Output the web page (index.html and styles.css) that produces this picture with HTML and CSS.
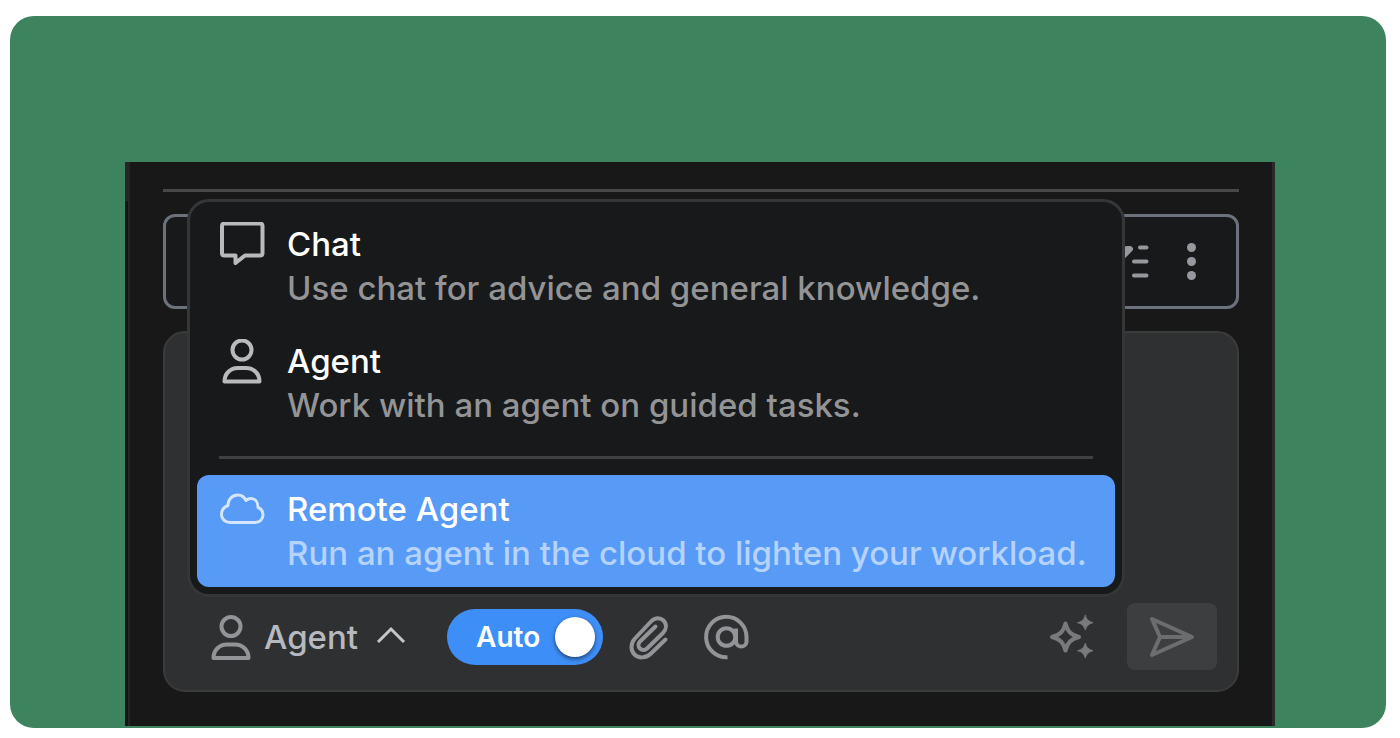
FILE: index.html
```html
<!DOCTYPE html>
<html lang="en">
<head>
<meta charset="utf-8">
<title>Agent mode menu</title>
<link rel="stylesheet" href="styles.css">
</head>
<body>
<main class="stage">
  <section class="panel">
    <hr class="panel-rule">
    <div class="thread-bar">
      <button class="icon-btn" aria-label="Tasks">
        <svg class="icon" viewBox="0 0 46 46"><path d="M31 8.500H37.500M25 22.500H37.500M25 36.500H37.500"/><path class="task-check" d="M3 13L11 20L21 10H18"/></svg>
      </button>
      <button class="icon-btn" aria-label="More options">
        <svg class="icon dots" viewBox="0 0 46 46"><circle cx="22.500" cy="8.500" r="4.500"/><circle cx="22.500" cy="22.500" r="4.500"/><circle cx="22.500" cy="36.500" r="4.500"/></svg>
      </button>
    </div>

    <form class="composer">
      <textarea class="prompt" aria-label="Prompt"></textarea>
      <div class="toolbar">
        <button type="button" class="mode-btn" aria-haspopup="menu" aria-expanded="true">
          <svg class="icon" viewBox="0 0 46 46"><circle cx="23" cy="12.500" r="9.500"/><path d="M5.500 44C5.500 36 11.500 30.500 19 30.500H27C34.500 30.500 40.500 36 40.500 44Z"/></svg>
          <span>Agent</span>
          <svg class="chevron" viewBox="0 0 32 46"><path d="M3 28L16 15L29 28"/></svg>
        </button>
        <label class="toggle">
          <span>Auto</span>
          <input class="knob" type="checkbox" role="switch" checked>
        </label>
        <button type="button" class="icon-btn attach" aria-label="Attach file">
          <svg class="icon" viewBox="0 0 46 46"><path d="M39.500 25.500L25 39.500C20 44.500 12.500 44.500 8.500 40.500C4.500 36.500 4.500 29.500 8.500 25L25 7.500C28.500 3.500 34 3 37.500 6.500C41 10 40.500 15 37 19L21 34.500C19 36.500 16 36.500 14 34.500C12 32.500 12 29.500 14 27.500L29.500 12.500"/></svg>
        </button>
        <button type="button" class="icon-btn" aria-label="Mention">
          <svg class="icon at" viewBox="0 0 46 46"><circle cx="23.500" cy="23" r="8.800"/><path d="M33 14.500V28A5.300 5.300 0 0 0 43.500 28V23A20.200 20.200 0 1 0 24.500 43.200"/></svg>
        </button>
        <button type="button" class="icon-btn enhance" aria-label="Enhance prompt">
          <svg class="icon" viewBox="0 0 46 46"><path d="M17.500 9.500C19.500 17.500 23 21 31 23C23 25 19.500 28.500 17.500 36.500C15.500 28.500 12 25 4 23C12 21 15.500 17.500 17.500 9.500Z"/><path class="solid" d="M37.300 1.500C38.800 6 40.500 7.500 45 8.700C40.500 9.900 38.800 11.500 37.300 16C35.800 11.500 34.100 9.900 29.600 8.700C34.100 7.500 35.800 6 37.300 1.500ZM37.300 29.500C38.800 34 40.500 35.500 45 36.700C40.500 37.900 38.800 39.500 37.300 44C35.800 39.500 34.100 37.900 29.600 36.700C34.100 35.500 35.800 34 37.300 29.500Z"/></svg>
        </button>
        <button class="send" aria-label="Send">
          <svg class="icon" viewBox="0 0 46 46"><path d="M3 5L43 23L3 41L11 23ZM11 23H43"/></svg>
        </button>
      </div>
    </form>

    <div class="menu" role="menu" aria-label="Mode">
      <button class="item" role="menuitem">
        <svg class="icon" viewBox="0 0 46 46"><path d="M5.500 1.500H41C42.500 1.500 43.500 2.500 43.500 4V31C43.500 32.500 42.500 33.500 41 33.500H26L16.500 41V33.500H5.500C4 33.500 3 32.500 3 31V4C3 2.500 4 1.500 5.500 1.500Z"/></svg>
        <span class="copy"><span class="title">Chat</span><span class="desc">Use chat for advice and general knowledge.</span></span>
      </button>
      <button class="item" role="menuitem">
        <svg class="icon" viewBox="0 0 46 46"><circle cx="23" cy="11" r="9.500"/><path d="M5.500 42.500C5.500 34.500 11.500 29 19 29H27C34.500 29 40.500 34.500 40.500 42.500Z"/></svg>
        <span class="copy"><span class="title">Agent</span><span class="desc">Work with an agent on guided tasks.</span></span>
      </button>
      <hr class="menu-rule">
      <button class="item selected" role="menuitem">
        <svg class="icon" viewBox="0 0 46 46"><path d="M11 35.500H36.500C41 35.500 44 32 44 28C44 24.500 42 21.500 39 20.500C39 15 36 11.500 32 11.500C30 11.500 28.500 12 27 13.500C25 9.500 22 8 19 8C13 8 9 12.500 9 18.500C5 20 2.500 23 2.500 27.500C2.500 32 6 35.500 11 35.500Z"/></svg>
        <span class="copy"><span class="title">Remote Agent</span><span class="desc">Run an agent in the cloud to lighten your workload.</span></span>
      </button>
    </div>
  </section>
</main>
</body>
</html>
```

FILE: styles.css
```css
* { box-sizing: border-box; }

body {
  margin: 0;
  padding: 16px 14px 10px 10px;
  background: #fff;
  font-family: Inter, "Liberation Sans", sans-serif;
}

button {
  border: 0;
  padding: 0;
  background: none;
  color: inherit;
  font: inherit;
  text-align: left;
}

hr { margin: 0; border: 0; }

.stage {
  padding: 146px 111px 2px 115px;
  border-radius: 24px;
  background: #3d845e;
}

.panel {
  position: relative;
  padding: 27px 33px 34px 33px;
  border-left: 5px solid #262626;
  border-right: 3px solid #2a2a2a;
  background: #181818;
}

.panel::before {
  content: "";
  position: absolute;
  top: 39px;
  bottom: 0;
  left: -5px;
  width: 3px;
  background: #141415;
}

.panel-rule { height: 3px; background: #484848; }

.thread-bar {
  display: flex;
  justify-content: flex-end;
  align-items: center;
  gap: 14px;
  height: 95px;
  margin-top: 22px;
  padding-right: 21px;
  border: 3px solid #6c727c;
  border-radius: 12px;
  background: #18191b;
  color: #97989d;
}

.icon-btn { display: flex; }

.icon {
  flex: none;
  width: 46px;
  height: 46px;
  fill: none;
  stroke: currentColor;
  stroke-width: 4;
  stroke-linecap: round;
  stroke-linejoin: round;
}

.dots { fill: currentColor; stroke: none; }

.task-check { stroke-width: 6; }

.composer {
  margin-top: 22px;
  padding: 3px 20px 20px 43px;
  border: 2px solid #3a3b3b;
  border-radius: 22px;
  background: #2f3031;
}

.prompt {
  display: block;
  width: 100%;
  height: 267px;
  border: 0;
  background: transparent;
  color: #fff;
  font: inherit;
  resize: none;
  outline: 0;
}

.toolbar { display: flex; align-items: center; color: #929498; }

.mode-btn {
  display: flex;
  align-items: center;
  gap: 10px;
  font-size: 33px;
  font-weight: 500;
  line-height: 44px;
}

.mode-btn span { color: #b6b9bf; }

.chevron {
  width: 32px;
  height: 46px;
  margin-left: 7px;
  fill: none;
  stroke: #c4c6ca;
  stroke-width: 3;
}

.toggle {
  display: flex;
  align-items: center;
  justify-content: space-between;
  width: 156px;
  height: 56px;
  margin-left: 40px;
  padding: 0 8px 0 29px;
  border-radius: 28px;
  background: #3e8ef7;
  color: #fff;
  font-size: 28px;
  font-weight: 600;
}

.knob {
  appearance: none;
  width: 40px;
  height: 40px;
  margin: 0;
  border-radius: 50%;
  background: #fff;
  box-shadow: 0 2px 4px #0008;
}

.attach { margin: 0 31px 0 23px; }

.at { stroke-linecap: butt; }

.enhance { margin-left: auto; color: #797a7c; }

.solid { fill: currentColor; stroke-width: 1; }

.send {
  display: flex;
  align-items: center;
  justify-content: center;
  width: 90px;
  height: 67px;
  margin-left: 33px;
  border-radius: 8px;
  background: #3d3e40;
  color: #6c6d6f;
}

.menu {
  position: absolute;
  top: 37px;
  left: 57px;
  right: 147px;
  display: flex;
  flex-direction: column;
  padding: 8px 7px 7px;
  border: 3px solid #353637;
  border-radius: 22px;
  background: #18191b;
}

.item {
  display: flex;
  gap: 22px;
  padding: 12px 22px 11px;
  border-radius: 12px;
  color: #b9babc;
}

.item + .item { margin-top: 5px; }

.copy { display: flex; flex-direction: column; white-space: nowrap; }

.title, .desc { font-size: 33px; font-weight: 500; }

.title { color: #fff; line-height: 44px; }

.desc { color: #939496; line-height: 45px; }

.menu-rule { height: 3px; margin: 17px 22px 16px; background: #404144; }

.selected { background: #589bf7; color: #d5e5fd; }

.selected .icon { stroke-width: 3; }

.selected .desc { color: #b5d3fc; }
```
